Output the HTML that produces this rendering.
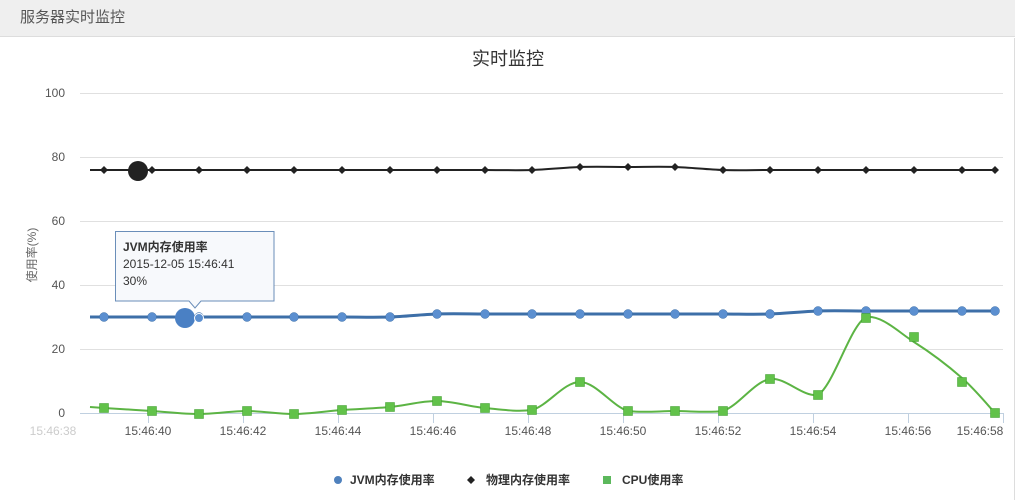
<!DOCTYPE html>
<html><head><meta charset="utf-8"><style>
body{margin:0;width:1031px;height:500px;background:#fff;overflow:hidden;font-family:"Liberation Sans","Noto Sans CJK SC",sans-serif}
.hd{position:absolute;left:0;top:0;width:1015px;height:37px;background:#efefef;border-bottom:1px solid #ddd;color:#555;font-size:15px;line-height:36px;padding-left:20px;box-sizing:border-box}
.rb{position:absolute;left:1014px;top:38px;width:1px;height:462px;background:#ddd}
svg{position:absolute;left:0;top:0}
text{font-family:"Liberation Sans","Noto Sans CJK SC",sans-serif}
</style></head><body>
<div class="hd">服务器实时监控</div>
<div class="rb"></div>
<svg id="s" width="1031" height="500" xmlns="http://www.w3.org/2000/svg">
<text x="508" y="65" font-size="18" text-anchor="middle" fill="#333">实时监控</text>
<g stroke="#e0e0e0" stroke-width="1">
<line x1="80" y1="93.5" x2="1003" y2="93.5"/><line x1="80" y1="157.5" x2="1003" y2="157.5"/>
<line x1="80" y1="221.5" x2="1003" y2="221.5"/><line x1="80" y1="285.5" x2="1003" y2="285.5"/>
<line x1="80" y1="349.5" x2="1003" y2="349.5"/></g>
<line x1="80" y1="413.5" x2="1003" y2="413.5" stroke="#c0d0e0"/>
<g fill="#555" font-size="12" text-anchor="end">
<text x="65" y="97">100</text><text x="65" y="161">80</text><text x="65" y="225">60</text><text x="65" y="289">40</text><text x="65" y="353">20</text><text x="65" y="417">0</text></g>
<text transform="translate(36,255) rotate(-90)" font-size="12" fill="#666" text-anchor="middle">使用率(%)</text>
<g id="ticks" stroke="#c0d0e0"></g>
<g id="xl" font-size="12" fill="#555" text-anchor="middle"></g>
<g id="lines"></g>
<g transform="translate(115,231)">
<path d="M0.5,0.5 H159 V70 H86 L80,77 L74,70 H0.5 Z" fill="#f7f9fc" stroke="#4572a7" stroke-opacity="0.8"/>
<text x="8" y="20" font-size="12" font-weight="bold" fill="#333">JVM内存使用率</text>
<text x="8" y="37" font-size="12" fill="#333">2015-12-05 15:46:41</text>
<text x="8" y="54" font-size="12" fill="#333">30%</text>
</g>
<g font-size="12" font-weight="bold" fill="#333">
<circle cx="338" cy="480" r="4" fill="#4f81bd"/><text x="350" y="484">JVM内存使用率</text>
<path d="M471,476 L475,480 L471,484 L467,480Z" fill="#222"/><text x="486" y="484">物理内存使用率</text>
<rect x="603" y="476" width="8" height="8" fill="#5cb85c"/><text x="622" y="484">CPU使用率</text>
</g>
</svg>
<script>
var X=[104,152,199,247,294,342,390,437,485,532,580,628,675,723,770,818,866,914,962,995];
var J=[317,317,317,317,317,317,317,314,314,314,314,314,314,314,314,311,311,311,311,311];
var M=[170,170,170,170,170,170,170,170,170,170,167,167,167,170,170,170,170,170,170,170];
var C=[408,411,414,411,414,410,407,401,408,410,382,411,411,411,379,395,318,337,382,413];
var C2=[408,411,414,411,414,410,407,401,408,410,382,411,411,411,379,395,317,342,378,413];
function cl(v,a,b){var lo=Math.min(a,b),hi=Math.max(a,b);return Math.max(lo-2,Math.min(hi+2,v));}
function sp(Y){var d="";for(var i=0;i<X.length-1;i++){var p0=i?i-1:0,p3=i+2<X.length?i+2:i+1;
var c1x=X[i]+(X[i+1]-X[p0])/6,c1y=Y[i]+(Y[i+1]-Y[p0])/6,c2x=X[i+1]-(X[p3]-X[i])/6,c2y=Y[i+1]-(Y[p3]-Y[i])/6;
c1y=cl(c1y,Y[i],Y[i+1]);c2y=cl(c2y,Y[i],Y[i+1]);
d+=" C"+c1x+","+c1y+" "+c2x+","+c2y+" "+X[i+1]+","+Y[i+1];}return d;}
var ns="http://www.w3.org/2000/svg",L=document.getElementById("lines");
function el(t,a){var e=document.createElementNS(ns,t);for(var k in a)e.setAttribute(k,a[k]);L.appendChild(e);return e;}
el("path",{d:"M90,317 L104,317"+sp(J),fill:"none",stroke:"#3d6fa8","stroke-width":3});
el("path",{d:"M90,170 L104,170"+sp(M),fill:"none",stroke:"#222","stroke-width":2});
el("path",{d:"M90,407 L104,408"+sp(C2),fill:"none",stroke:"#5cb444","stroke-width":2});
for(var i=0;i<X.length;i++){
el("circle",{cx:X[i],cy:J[i],r:4.5,fill:"#5b8fd0",stroke:"#3d6fa8","stroke-width":0.5});
el("path",{d:"M"+X[i]+","+(M[i]-4)+" l4,4 l-4,4 l-4,-4z",fill:"#222"});
el("rect",{x:X[i]-4.5,y:C[i]-4.5,width:9,height:9,fill:"#62c24a",stroke:"#3a9a2a","stroke-width":0.5});}
el("circle",{cx:185,cy:318,r:10,fill:"#4a80c4"});
el("circle",{cx:199,cy:318,r:4.5,fill:"#5b8fd0",stroke:"#fff","stroke-width":1});
el("circle",{cx:138,cy:171,r:10,fill:"#222"});
var T=document.getElementById("ticks"),XL=document.getElementById("xl");
var tx=[53,148,243,338,433,528,623,718,813,908,1003];
for(var i=0;i<tx.length;i++){var s=38+2*i;
if(i>0){var l=document.createElementNS(ns,"line");l.setAttribute("x1",tx[i]+.5);l.setAttribute("x2",tx[i]+.5);l.setAttribute("y1",413);l.setAttribute("y2",423);T.appendChild(l);}
var t=document.createElementNS(ns,"text");t.setAttribute("x",i==10?980:tx[i]);t.setAttribute("y",435);
if(i==0)t.setAttribute("fill","#ccc");t.textContent="15:46:"+s;XL.appendChild(t);}
</script>
</body></html>
